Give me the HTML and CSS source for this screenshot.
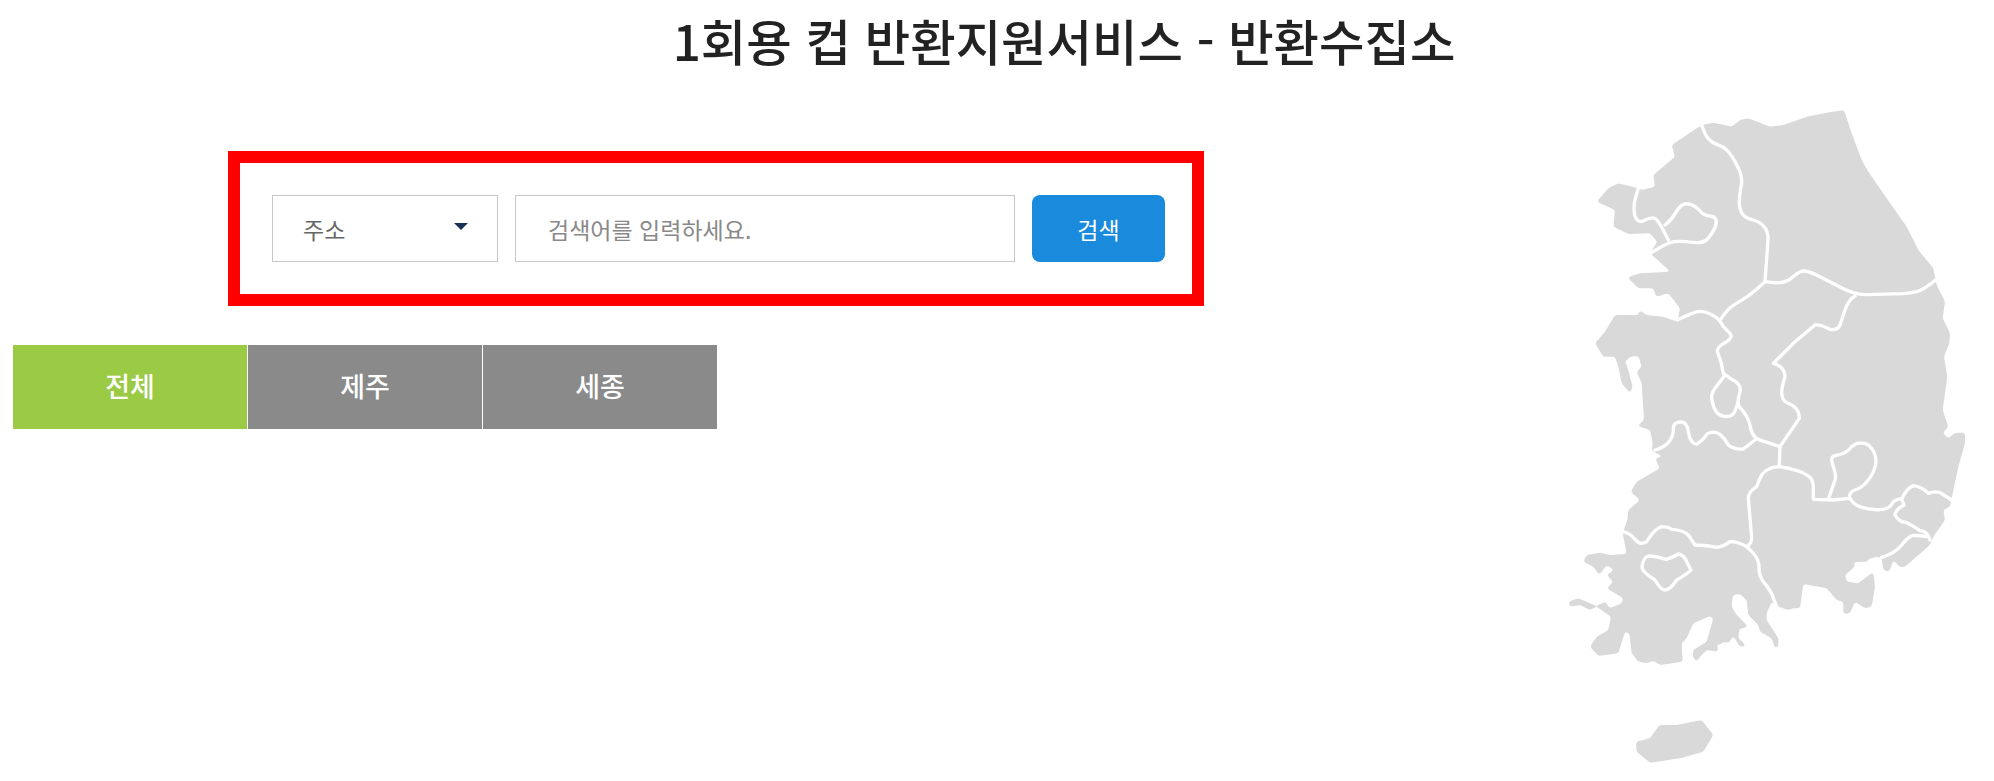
FILE: index.html
```html
<!DOCTYPE html>
<html lang="ko">

<head>
    <meta charset="UTF-8">
    <title>1회용 컵 반환지원서비스 - 반환수집소</title>
    <link rel="stylesheet" href="styles.css">
</head>

<body>
    <div class="page">
        <main class="content">
            <h1 class="title">1회용 컵 반환지원서비스 - 반환수집소</h1>

            <form class="search">
                <div class="search-select">
                    <span>주소</span>
                    <i class="arrow"></i>
                </div>
                <input class="search-input" type="text" placeholder="검색어를 입력하세요.">
                <button class="search-btn" type="button">검색</button>
            </form>

            <div class="tabs">
                <a class="tab active" href="#">전체</a>
                <a class="tab" href="#">제주</a>
                <a class="tab" href="#">세종</a>
            </div>
        </main>

        <aside class="map">
            <svg class="map-svg" viewBox="0 0 1362 2043" width="454" height="681">
                <defs>
                    <filter id="round-land" x="-5%" y="-5%" width="110%" height="110%">
                        <feGaussianBlur stdDeviation="5" />
                        <feComponentTransfer>
                            <feFuncA type="linear" slope="4" intercept="-1.5" />
                        </feComponentTransfer>
                    </filter>
                </defs>

                <g class="land" filter="url(#round-land)">
                    <path d="M485 75 L520 68 L550 74 L575 80 L600 60 L625 55 L660 68 L690 80 L730 75 L800 50 L860 38 L912 30 L935 100 L965 180 L985 215 L1040 295 L1100 380 L1135 450 L1180 505 L1187 540 L1190 555 L1215 605 L1208 655 L1230 700 L1228 730 L1212 770 L1222 830 L1208 930 L1225 980 L1208 1000 L1225 1015 L1245 998 L1275 998 L1275 1030 L1255 1100 L1235 1195 L1230 1220 L1210 1230 L1215 1260 L1180 1310 L1170 1335 L1095 1400 L1080 1402 L1060 1380 L1048 1415 L1030 1410 L1025 1375 L1015 1370 L990 1375 L980 1385 L940 1387 L945 1400 L915 1425 L920 1445 L955 1450 L1000 1415 L1005 1460 L995 1520 L975 1525 L945 1505 L930 1540 L910 1542 L910 1505 L890 1500 L860 1465 L790 1452 L780 1525 L760 1525 L745 1530 L715 1520 L695 1505 L680 1540 L680 1560 L715 1615 L715 1640 L705 1645 L695 1615 L660 1595 L655 1575 L625 1545 L620 1500 L600 1482 L578 1485 L575 1520 L590 1545 L625 1580 L598 1587 L595 1615 L620 1638 L600 1640 L580 1608 L565 1630 L550 1625 L540 1635 L530 1630 L535 1655 L500 1650 L480 1670 L470 1685 L458 1670 L460 1650 L500 1625 L520 1555 L510 1548 L460 1570 L440 1615 L425 1630 L428 1685 L360 1695 L340 1682 L320 1690 L295 1685 L275 1660 L268 1600 L255 1595 L235 1660 L175 1668 L150 1640 L170 1610 L205 1590 L213 1550 L170 1520 L150 1530 L120 1515 L90 1520 L85 1505 L115 1495 L150 1510 L170 1517 L195 1505 L210 1525 L245 1510 L250 1495 L200 1465 L220 1445 L200 1425 L222 1410 L200 1395 L178 1425 L160 1400 L130 1385 L140 1365 L180 1358 L210 1365 L260 1362 L248 1300 L262 1260 L265 1230 L300 1200 L272 1175 L290 1145 L360 1105 L345 1075 L370 1070 L335 1052 L338 1030 L330 990 L292 978 L312 960 L305 850 L290 815 L305 800 L295 768 L270 770 L255 785 L262 800 L278 860 L270 880 L245 850 L235 800 L225 770 L190 770 L165 730 L195 695 L225 645 L295 645 L298 630 L320 645 L370 650 L412 665 L420 625 L385 580 L348 590 L340 565 L295 565 L262 532 L300 520 L392 515 L330 460 L352 425 L330 400 L265 402 L220 380 L225 330 L170 305 L205 265 L235 250 L295 265 L305 270 L345 260 L340 225 L405 170 L395 135 Z" />
                    <path d="M288 1925 L330 1915 L358 1875 L410 1875 L485 1860 L520 1905 L490 1955 L420 1975 L330 1988 L290 1955 Z" />
                </g>

                <g class="borders">
                    <path d="M485 75 Q495 105 505 116 Q515 128 532 134 Q550 140 562 152 Q575 165 592 198 Q610 232 603 261 Q597 290 598 312 Q600 335 610 345 Q620 355 640 360 Q660 365 672 380 Q685 395 684 420 L675 545" />
                    <path d="M675 545 L700 548 Q720 550 735 545 Q750 540 765 526 Q780 512 795 513 Q810 515 840 530 L900 561 Q945 585 980 584 L1090 581 Q1110 580 1130 575 Q1150 570 1187 540" />
                    <path d="M675 545 L650 568 Q625 590 598 605 Q570 620 555 640 L540 660" />
                    <path d="M295 265 L286 295 Q278 325 285 348 Q293 372 314 361 Q335 350 345 356 Q355 362 370 391 L385 420" />
                    <path d="M375 375 Q395 360 407 338 Q420 315 435 312 Q450 310 462 318 Q475 325 482 335 Q490 345 510 348 Q535 350 527 378 Q515 405 500 420 Q485 430 460 427 Q420 422 402 425 Q385 428 358 444 L330 460" />
                    <path d="M412 660 L431 651 Q450 642 465 637 Q480 632 495 636 Q510 640 525 650 Q540 660 550 680 L570 700 Q580 712 560 725 Q530 740 532 755 Q545 785 550 820 L575 838 Q605 852 600 875 Q590 905 598 920 Q625 950 630 975 Q635 1015 665 1022 L720 1040" />
                    <path d="M555 825 L525 865 Q510 885 517 905 Q525 945 550 948 Q580 955 588 925 L595 905" />
                    <path d="M345 1050 Q380 1040 392 1018 Q402 1000 400 985 Q400 965 425 966 Q442 968 445 995 Q450 1030 470 1032 Q490 1020 500 1003 Q520 990 540 1003 Q555 1015 565 1035 Q585 1050 610 1047 L645 1020" />
                    <path d="M945 588 Q925 600 915 630 L900 675 Q893 692 870 688 Q840 672 825 675 L760 730 L700 790 Q735 800 735 830 Q725 860 725 880 Q728 905 745 910 Q780 925 778 955 L720 1040 L718 1095" />
                    <path d="M718 1100 Q680 1102 665 1125 Q655 1145 650 1160 Q625 1175 625 1195 L635 1315 Q635 1330 620 1340 Q655 1370 657 1395 Q655 1425 670 1445 Q695 1475 700 1495 L710 1520" />
                    <path d="M718 1100 Q780 1110 800 1125 Q820 1135 820 1160 L820 1198 L880 1200 L930 1195 Q940 1215 965 1222 Q1000 1232 1030 1228 Q1050 1225 1060 1205 Q1075 1195 1085 1197 Q1100 1165 1120 1157 Q1145 1160 1165 1180 Q1185 1172 1200 1178 L1235 1200" />
                    <path d="M865 1198 L885 1140 Q890 1125 878 1095 Q870 1070 885 1067 Q920 1062 935 1040 Q960 1020 985 1035 Q1008 1055 1008 1085 Q1005 1115 985 1140 Q965 1165 945 1170 Q930 1175 928 1190" />
                    <path d="M1085 1197 L1092 1215 Q1065 1230 1065 1245 Q1075 1265 1100 1268 Q1125 1280 1140 1292 Q1165 1295 1170 1320" />
                    <path d="M1165 1310 Q1130 1305 1115 1307 Q1100 1315 1085 1335 Q1065 1360 1025 1372" />
                    <path d="M250 1295 Q270 1300 285 1318 Q300 1338 320 1325 Q345 1285 365 1280 Q385 1280 395 1288 Q430 1290 445 1305 L465 1335 Q490 1335 530 1342 Q550 1340 570 1325 Q595 1325 620 1340" />
                    <path d="M325 1368 Q345 1368 378 1378 Q400 1372 415 1362 Q432 1365 440 1385 L453 1410 Q445 1420 410 1440 Q390 1470 375 1470 Q362 1470 345 1440 Q305 1415 306 1400 Q310 1372 325 1368 Z" />
                </g>
            </svg>
        </aside>
    </div>
</body>

</html>
```

FILE: styles.css
```css
html,
body {
    margin: 0;
    padding: 0;
    background: #fff;
}

body {
    font-family: "Noto Sans CJK KR", "Noto Sans", sans-serif;
}

.page {
    display: flex;
    height: 781px;
    overflow: hidden;
}

.content {
    flex: auto;
    min-width: 0;
}

.title {
    margin: 0;
    padding-left: 588px;
    font-size: 49.4px;
    font-weight: 500;
    line-height: 80px;
    color: #222;
    text-align: center;
    white-space: nowrap;
}

.search {
    display: flex;
    align-items: stretch;
    gap: 17px;
    box-sizing: border-box;
    width: 976px;
    height: 155px;
    margin: 71px 0 0 228px;
    padding: 32px 27px 32px 32px;
    border: 12px solid #f00;
}

.search-select {
    display: flex;
    justify-content: space-between;
    align-items: center;
    box-sizing: border-box;
    width: 226px;
    padding: 0 30px;
    border: 1px solid #c8c8c8;
    font-size: 23px;
    color: #666;
}

.arrow {
    width: 0;
    height: 0;
    margin-right: -1px;
    margin-bottom: 5px;
    border-top: 7px solid #1a2f55;
    border-left: 7px solid transparent;
    border-right: 7px solid transparent;
}

.search-input {
    box-sizing: border-box;
    width: 500px;
    padding: 0 32px;
    border: 1px solid #c8c8c8;
    border-radius: 0;
    outline: none;
    font-family: inherit;
    font-size: 23px;
    color: #666;
}

.search-input::placeholder {
    color: #888;
    opacity: 1;
}

.search-btn {
    width: 133px;
    padding: 0;
    border: none;
    border-radius: 8px;
    background: #1a8add;
    font-family: inherit;
    font-size: 23px;
    color: #fff;
}

.tabs {
    display: flex;
    gap: 1px;
    margin: 39px 0 0 13px;
}

.tab {
    display: flex;
    justify-content: center;
    align-items: center;
    width: 234px;
    height: 84px;
    padding-bottom: 3px;
    box-sizing: border-box;
    background: #8a8a8a;
    font-size: 27px;
    font-weight: 500;
    color: #fff;
    text-decoration: none;
}

.tab.active {
    background: #9bca45;
}

.map {
    flex: none;
    width: 454px;
    padding-top: 100px;
}

.map-svg {
    display: block;
    filter: blur(0.4px);
}

.land {
    fill: #d9d9d9;
}

.borders path {
    fill: none;
    stroke: #fff;
    stroke-width: 10;
    stroke-linejoin: round;
    stroke-linecap: round;
}
```
